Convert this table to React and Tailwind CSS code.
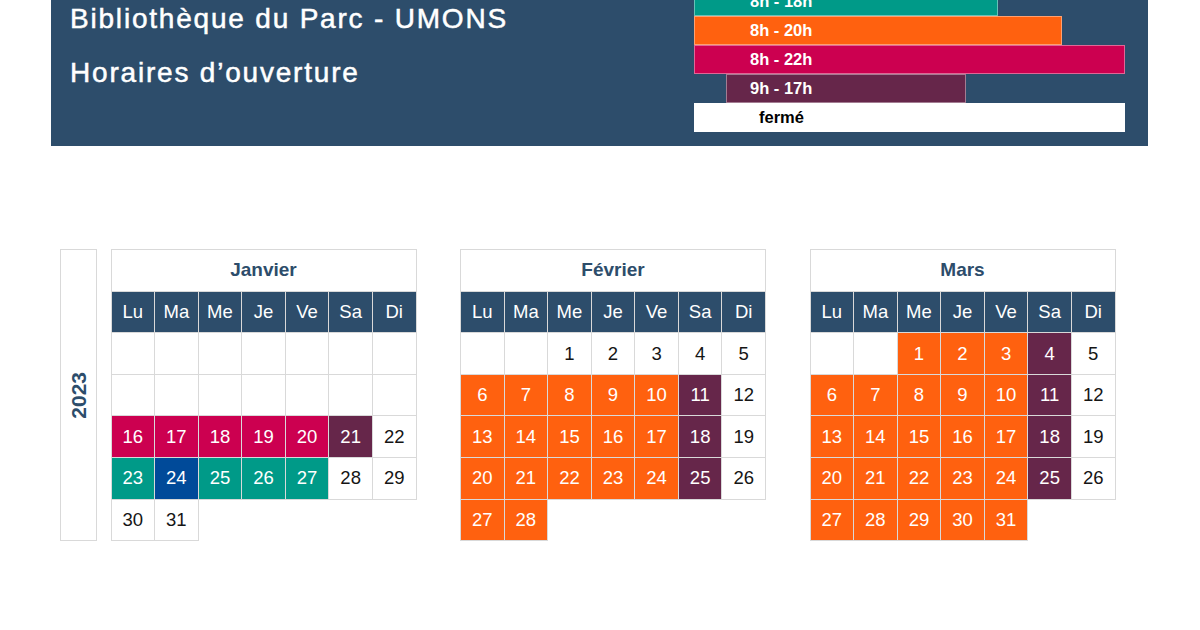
const NAVY = 'bg-[#2d4d6b]'

const cellColors = {
  o: 'bg-[#ff610f] text-white',
  p: 'bg-[#66264a] text-white',
  r: 'bg-[#cc0050] text-white',
  t: 'bg-[#009a88] text-white',
  b: 'bg-[#004a99] text-white',
  w: 'bg-white text-[#151515]',
}

// "16r" -> day 16, crimson ; "_" -> empty bordered cell
const parse = (rows) =>
  rows.flatMap((row) =>
    row.split(' ').map((t) => (t === '_' ? { d: '', c: 'w' } : { d: t.slice(0, -1), c: t.slice(-1) }))
  )

const months = [
  {
    name: 'Janvier',
    days: parse([
      '_ _ _ _ _ _ _',
      '_ _ _ _ _ _ _',
      '16r 17r 18r 19r 20r 21p 22w',
      '23t 24b 25t 26t 27t 28w 29w',
      '30w 31w',
    ]),
  },
  {
    name: 'Février',
    days: parse([
      '_ _ 1w 2w 3w 4w 5w',
      '6o 7o 8o 9o 10o 11p 12w',
      '13o 14o 15o 16o 17o 18p 19w',
      '20o 21o 22o 23o 24o 25p 26w',
      '27o 28o',
    ]),
  },
  {
    name: 'Mars',
    days: parse([
      '_ _ 1o 2o 3o 4p 5w',
      '6o 7o 8o 9o 10o 11p 12w',
      '13o 14o 15o 16o 17o 18p 19w',
      '20o 21o 22o 23o 24o 25p 26w',
      '27o 28o 29o 30o 31o',
    ]),
  },
]

const weekdays = ['Lu', 'Ma', 'Me', 'Je', 'Ve', 'Sa', 'Di']

const legend = [
  { label: '8h - 18h', cls: 'bg-[#009a88] text-white w-[304px] pl-[55px]' },
  { label: '8h - 20h', cls: 'bg-[#ff610f] text-white w-[368px] pl-[55px]' },
  { label: '8h - 22h', cls: 'bg-[#cc0050] text-white w-[431px] pl-[55px]' },
  { label: '9h - 17h', cls: 'bg-[#66264a] text-white w-[240px] ml-[32px] pl-[23px]' },
  { label: 'fermé', cls: 'bg-white text-black w-[431px] pl-[64px]' },
]

const Month = ({ name, days }) => (
  <div className="grid w-[305px] grid-cols-7 self-start">
    <div className="col-span-7 -mb-px -mr-px flex h-[42.6px] items-center justify-center border border-[#d9d9d9] bg-white text-[19px] font-bold text-[#2d4d6b]">
      {name}
    </div>
    {weekdays.map((w) => (
      <div
        key={w}
        className={`-mb-px -mr-px flex h-[42.6px] items-center justify-center border border-[#d9d9d9] ${NAVY} text-[18.5px] text-white`}
      >
        {w}
      </div>
    ))}
    {days.map((day, i) => (
      <div
        key={i}
        className={`-mb-px -mr-px flex h-[42.6px] items-center justify-center border border-[#d9d9d9] text-[18.5px] ${cellColors[day.c]}`}
      >
        {day.d}
      </div>
    ))}
  </div>
)

export default function App() {
  return (
    <div className="h-[630px] w-[1200px] overflow-hidden bg-white" style={{ fontFamily: '"Liberation Sans", Arial, sans-serif' }}>
      {/* Header band */}
      <header className={`ml-[51px] flex h-[146px] w-[1097px] overflow-hidden ${NAVY}`}>
        <div className="flex w-[643px] flex-col gap-[22px] pl-[19px] pt-[3px] text-[28px] leading-[32px] tracking-[1.8px] text-white [-webkit-text-stroke:0.5px_white]">
          <h1>Bibliothèque du Parc - UMONS</h1>
          <h2>Horaires d’ouverture</h2>
        </div>
        <div className="-mt-[13.5px] flex flex-col">
          {legend.map((l) => (
            <div
              key={l.label}
              className={`flex h-[29px] shrink-0 items-center border border-white/40 text-[16.5px] font-bold ${l.cls}`}
            >
              {l.label}
            </div>
          ))}
        </div>
      </header>

      {/* Calendars */}
      <div className="flex pl-[60px] pt-[103px]">
        <div className="flex h-[292px] w-[37px] items-center justify-center border border-[#d9d9d9]">
          <span className="rotate-180 text-[21px] font-bold text-[#2d4d6b] [writing-mode:vertical-rl]">2023</span>
        </div>
        <div className="ml-[13.5px] flex gap-[44.5px]">
          {months.map((m) => (
            <Month key={m.name} {...m} />
          ))}
        </div>
      </div>
    </div>
  )
}
